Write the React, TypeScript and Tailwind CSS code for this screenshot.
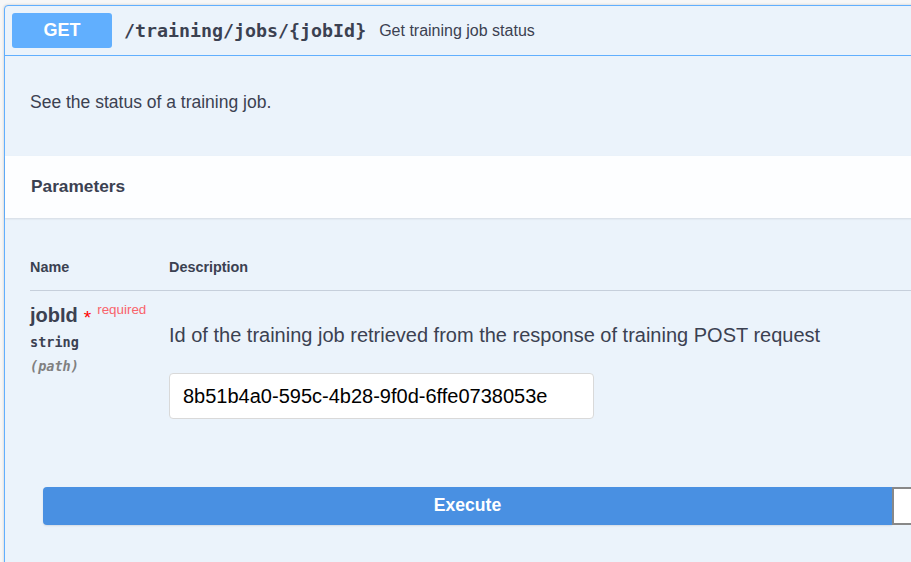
const sans = { fontFamily: '"Liberation Sans", Arial, sans-serif' };

const App = () => {
  return (
    <div
      className="w-[911px] h-[562px] overflow-hidden bg-[#f7f7f7] pt-[5px] pl-[4px] text-[#3b4151]"
      style={sans}
    >
      <div className="w-[1000px] h-[600px] border border-[#61affe] rounded-[4px] bg-[#ebf3fb] shadow-[0_0_3px_rgba(0,0,0,0.19)]">
        {/* summary */}
        <div className="flex items-center h-[50px] px-[7px] border-b border-[#61affe]">
          <div className="w-[100px] h-[35px] rounded-[3px] bg-[#61affe] text-white font-bold text-[18px] flex items-center justify-center">
            GET
          </div>
          <span className="ml-[12px] font-bold text-[18.3px] font-['DejaVu_Sans_Mono',monospace]">
            /training/jobs/{"{jobId}"}
          </span>
          <span className="ml-[13px] text-[16px]">Get training job status</span>
        </div>

        {/* description */}
        <div className="h-[100px] flex items-center px-[25px] pb-[8px]">
          <p className="text-[17.5px]">See the status of a training job.</p>
        </div>

        {/* parameters header */}
        <div className="h-[62px] bg-white/90 flex items-center px-[26px] shadow-[0_1px_2px_rgba(0,0,0,0.1)]">
          <h4 className="font-bold text-[17.3px]">Parameters</h4>
        </div>

        {/* table */}
        <div className="pl-[25px] pt-[39px]">
          <div className="flex w-[900px] border-b border-[#c6cfdb] pb-[11px]">
            <div className="w-[139px] font-bold text-[14.4px]">Name</div>
            <div className="font-bold text-[14.4px]">Description</div>
          </div>
          <div className="flex pt-[12px]">
            <div className="w-[139px]">
              <div className="flex items-start">
                <span className="font-bold text-[20px] leading-[24px]">jobId</span>
                <span className="text-[red] text-[19px] ml-[6px] mt-[3px] leading-[24px]">*</span>
                <span className="text-[#f9636b] text-[13.4px] ml-[6px] -mt-[3px]">required</span>
              </div>
              <div className="font-bold text-[13.5px] font-['DejaVu_Sans_Mono',monospace] mt-[2px]">
                string
              </div>
              <div className="italic text-[13.5px] text-[#808080] font-bold font-['DejaVu_Sans_Mono',monospace] mt-[4px]">
                (path)
              </div>
            </div>
            <div className="pt-[18px]">
              <p className="text-[20px] leading-[28px]">
                Id of the training job retrieved from the response of training POST request
              </p>
              <div className="mt-[24px] w-[425px] h-[46px] bg-white border border-[#d9d9d9] rounded-[4px] flex items-center px-[13px] text-[20px] text-black">
                8b51b4a0-595c-4b28-9f0d-6ffe0738053e
              </div>
            </div>
          </div>
        </div>

        {/* execute */}
        <div className="flex pl-[38px] mt-[68px]">
          <button className="w-[849px] h-[38px] bg-[#4990e2] text-white font-bold text-[17.6px] rounded-l-[4px] shadow-[0_1px_2px_rgba(0,0,0,0.1)]">
            Execute
          </button>
          <button className="w-[60px] h-[38px] bg-white border-2 border-[#888] rounded-r-[4px]"></button>
        </div>
      </div>
    </div>
  );
};

export default App;
